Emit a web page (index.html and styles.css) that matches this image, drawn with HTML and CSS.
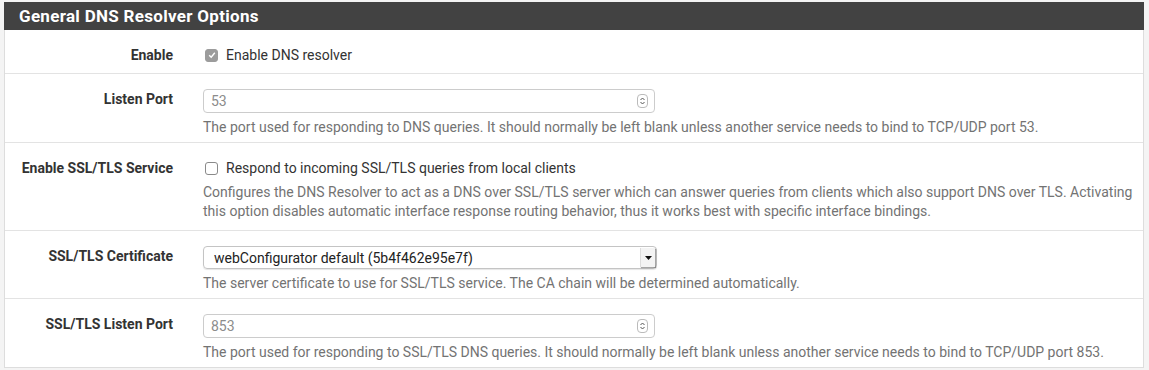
FILE: index.html
```html
<!DOCTYPE html>
<html lang="en">
<head>
    <meta charset="UTF-8">
    <title>Services: DNS Resolver: General Settings</title>
    <link rel="stylesheet" href="styles.css">
</head>
<body>
    <div class="panel">
        <div class="panel-heading">
            <h2>General DNS Resolver Options</h2>
        </div>
        <div class="panel-body">
            <div class="form-row">
                <label class="form-label">Enable</label>
                <div class="form-control-col">
                    <div class="check-line">
                        <span class="checkbox checked">
                            <svg width="8" height="8" viewBox="0 0 8 8"><path d="M1.2 4.2 L3.2 6.2 L6.8 1.8" fill="none" stroke="#fff" stroke-width="1.4"/></svg>
                        </span>
                        Enable DNS resolver
                    </div>
                </div>
            </div>

            <div class="form-row">
                <label class="form-label">Listen Port</label>
                <div class="form-control-col">
                    <div class="text-input">
                        <span class="input-value">53</span>
                        <span class="stepper">
                            <svg width="7" height="10" viewBox="0 0 7 10"><path d="M1.5 4 L3.5 2 L5.5 4 M1.5 6 L3.5 8 L5.5 6" fill="none" stroke="#555" stroke-width="1"/></svg>
                        </span>
                    </div>
                    <p class="help">The port used for responding to DNS queries. It should normally be left blank unless another service needs to bind to TCP/UDP port 53.</p>
                </div>
            </div>

            <div class="form-row">
                <label class="form-label">Enable SSL/TLS Service</label>
                <div class="form-control-col">
                    <div class="check-line">
                        <span class="checkbox"></span>
                        Respond to incoming SSL/TLS queries from local clients
                    </div>
                    <p class="help">Configures the DNS Resolver to act as a DNS over SSL/TLS server which can answer queries from clients which also support DNS over TLS. Activating this option disables automatic interface response routing behavior, thus it works best with specific interface bindings.</p>
                </div>
            </div>

            <div class="form-row">
                <label class="form-label">SSL/TLS Certificate</label>
                <div class="form-control-col">
                    <div class="select-box">
                        <span class="select-value">webConfigurator default (5b4f462e95e7f)</span>
                        <span class="select-arrow">
                            <svg width="7" height="4" viewBox="0 0 7 4"><path d="M0 0 H7 L3.5 4 Z" fill="#111"/></svg>
                        </span>
                    </div>
                    <p class="help">The server certificate to use for SSL/TLS service. The CA chain will be determined automatically.</p>
                </div>
            </div>

            <div class="form-row">
                <label class="form-label">SSL/TLS Listen Port</label>
                <div class="form-control-col">
                    <div class="text-input">
                        <span class="input-value">853</span>
                        <span class="stepper">
                            <svg width="7" height="10" viewBox="0 0 7 10"><path d="M1.5 4 L3.5 2 L5.5 4 M1.5 6 L3.5 8 L5.5 6" fill="none" stroke="#555" stroke-width="1"/></svg>
                        </span>
                    </div>
                    <p class="help">The port used for responding to SSL/TLS DNS queries. It should normally be left blank unless another service needs to bind to TCP/UDP port 853.</p>
                </div>
            </div>
        </div>
    </div>
</body>
</html>
```

FILE: styles.css
```css
body {
    font-family: Roboto, "Liberation Sans", Arial, sans-serif;
    font-size: 14px;
    color: #333;
    margin: 0;
    padding: 2px 5px 0 4px;
    background-color: #f4f4f4;
}
.panel {
    background-color: #fff;
    border: 1px solid #ddd;
    border-top: none;
}
.panel-heading {
    background-color: #424242;
    height: 28px;
    padding: 0 15px;
    margin: 0 -1px;
    display: flex;
    align-items: center;
}
.panel-heading h2 {
    margin: 0;
    color: #fff;
    font-size: 17px;
    font-weight: bold;
    letter-spacing: 0.3px;
}
.form-row {
    display: flex;
    padding: 15px 0 5px 0;
    border-bottom: 1px solid #e3e3e3;
}
.form-row:last-child {
    border-bottom: none;
}
.form-label {
    width: 168px;
    flex-shrink: 0;
    padding-right: 15px;
    text-align: right;
    font-weight: bold;
    line-height: 20px;
}
.form-control-col {
    flex: 1;
    padding: 0 10px 0 15px;
}
.check-line {
    display: flex;
    align-items: center;
    height: 20px;
    margin-bottom: 3px;
}
.checkbox {
    width: 11px;
    height: 11px;
    border: 1px solid #8a8a8a;
    border-radius: 3px;
    background-color: #fff;
    margin: 0 8px 0 2px;
    display: inline-flex;
    align-items: center;
    justify-content: center;
}
.checkbox.checked {
    background-color: #9c9c9c;
    border-color: #9c9c9c;
}
.text-input {
    width: 437px;
    height: 22px;
    border: 1px solid #ccc;
    border-radius: 4px;
    display: flex;
    align-items: center;
    justify-content: space-between;
    padding: 0 6px 0 7px;
    box-sizing: content-box;
}
.input-value {
    color: #8c8c8c;
}
.stepper {
    width: 9px;
    height: 12px;
    border: 1px solid #bbb;
    border-radius: 4px;
    display: inline-flex;
    align-items: center;
    justify-content: center;
}
.select-box {
    width: 452px;
    height: 21px;
    border: 1px solid #c4c4c4;
    border-radius: 4px;
    display: flex;
    align-items: center;
    justify-content: space-between;
    color: #222;
    box-shadow: 0 1px 1px rgba(0, 0, 0, 0.1);
}
.select-value {
    padding-left: 10px;
}
.select-arrow {
    width: 14px;
    height: 19px;
    margin-right: 1px;
    border-left: 1px solid #ddd;
    background-color: #f4f4f4;
    box-shadow: 1px 1px 1px rgba(0, 0, 0, 0.35);
    display: inline-flex;
    align-items: center;
    justify-content: center;
}
.help {
    margin: 5px 0 0 0;
    color: #737373;
    line-height: 19px;
}
.check-line + .help {
    margin-bottom: 4px;
}
```
